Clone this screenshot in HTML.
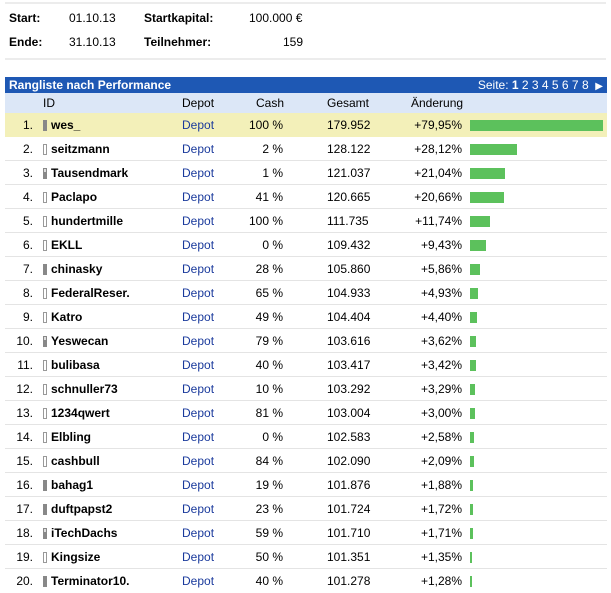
<!DOCTYPE html>
<html><head><meta charset="utf-8"><style>
*{margin:0;padding:0;box-sizing:border-box}
body{width:611px;height:593px;background:#fff;font-family:"Liberation Sans",Arial,sans-serif;font-size:12px;color:#000;position:relative;overflow:hidden}
.a{position:absolute;white-space:nowrap}
.hl{position:absolute;left:5px;width:601px;height:2px;background:#ececec}
.bar{position:absolute;left:5px;width:602px;height:16px;top:77px;background:#1e58b4;color:#fff;font-weight:bold;font-size:12px;line-height:16px;padding-left:4px}
.hdr{position:absolute;left:5px;width:602px;height:20px;top:93px;background:#dce7f7;line-height:20px}
.r{position:absolute;left:5px;width:602px;height:24px;line-height:24px;border-bottom:1px solid #e4e4e4}
.r.first{background:#f3f0b9;border-bottom:none}
.r span{position:absolute;top:0}
.n{right:574px;text-align:right}
.ic{left:38px;top:7px!important;width:4px;height:11px;border:1px solid #999}
.ic.f{background:#888;border-color:#888}
.ic.h{background:linear-gradient(#ddd 35%,#888 35%);border-color:#888}
.nm{left:46px;font-weight:bold}
.dp{left:177px;color:#1a3a9c}
.c{right:324px}
.g{left:322px}
.p{right:145px}
.b{left:465px;top:7px!important;height:11px;background:#5cc15c}
</style></head><body>
<div class="hl" style="top:2px"></div>
<div class="a" style="left:9px;top:11px;font-weight:bold">Start:</div>
<div class="a" style="left:69px;top:11px">01.10.13</div>
<div class="a" style="left:144px;top:11px;font-weight:bold">Startkapital:</div>
<div class="a" style="left:249px;top:11px">100.000 €</div>
<div class="a" style="left:9px;top:35px;font-weight:bold">Ende:</div>
<div class="a" style="left:69px;top:35px">31.10.13</div>
<div class="a" style="left:144px;top:35px;font-weight:bold">Teilnehmer:</div>
<div class="a" style="left:283px;top:35px">159</div>
<div class="hl" style="top:58px"></div>
<div class="bar">Rangliste nach Performance<span style="position:absolute;right:4px;top:0;font-weight:normal">Seite: <b>1</b> 2 3 4 5 6 7 8 &nbsp;<span style="font-size:10px">▶</span></span></div>
<div class="hdr"><span class="a" style="left:38px">ID</span><span class="a" style="left:177px">Depot</span><span class="a" style="left:251px">Cash</span><span class="a" style="left:322px">Gesamt</span><span class="a" style="left:406px">Änderung</span></div>

<div class="r first" style="top:113px"><span class="n">1.</span><span class="ic f"></span><span class="nm">wes_</span><span class="dp">Depot</span><span class="c">100 %</span><span class="g">179.952</span><span class="p">+79,95%</span><span class="b" style="width:133px"></span></div>
<div class="r" style="top:137px"><span class="n">2.</span><span class="ic"></span><span class="nm">seitzmann</span><span class="dp">Depot</span><span class="c">2 %</span><span class="g">128.122</span><span class="p">+28,12%</span><span class="b" style="width:47px"></span></div>
<div class="r" style="top:161px"><span class="n">3.</span><span class="ic h"></span><span class="nm">Tausendmark</span><span class="dp">Depot</span><span class="c">1 %</span><span class="g">121.037</span><span class="p">+21,04%</span><span class="b" style="width:35px"></span></div>
<div class="r" style="top:185px"><span class="n">4.</span><span class="ic"></span><span class="nm">Paclapo</span><span class="dp">Depot</span><span class="c">41 %</span><span class="g">120.665</span><span class="p">+20,66%</span><span class="b" style="width:34px"></span></div>
<div class="r" style="top:209px"><span class="n">5.</span><span class="ic"></span><span class="nm">hundertmille</span><span class="dp">Depot</span><span class="c">100 %</span><span class="g">111.735</span><span class="p">+11,74%</span><span class="b" style="width:20px"></span></div>
<div class="r" style="top:233px"><span class="n">6.</span><span class="ic"></span><span class="nm">EKLL</span><span class="dp">Depot</span><span class="c">0 %</span><span class="g">109.432</span><span class="p">+9,43%</span><span class="b" style="width:16px"></span></div>
<div class="r" style="top:257px"><span class="n">7.</span><span class="ic f"></span><span class="nm">chinasky</span><span class="dp">Depot</span><span class="c">28 %</span><span class="g">105.860</span><span class="p">+5,86%</span><span class="b" style="width:10px"></span></div>
<div class="r" style="top:281px"><span class="n">8.</span><span class="ic"></span><span class="nm">FederalReser.</span><span class="dp">Depot</span><span class="c">65 %</span><span class="g">104.933</span><span class="p">+4,93%</span><span class="b" style="width:8px"></span></div>
<div class="r" style="top:305px"><span class="n">9.</span><span class="ic"></span><span class="nm">Katro</span><span class="dp">Depot</span><span class="c">49 %</span><span class="g">104.404</span><span class="p">+4,40%</span><span class="b" style="width:7px"></span></div>
<div class="r" style="top:329px"><span class="n">10.</span><span class="ic h"></span><span class="nm">Yeswecan</span><span class="dp">Depot</span><span class="c">79 %</span><span class="g">103.616</span><span class="p">+3,62%</span><span class="b" style="width:6px"></span></div>
<div class="r" style="top:353px"><span class="n">11.</span><span class="ic"></span><span class="nm">bulibasa</span><span class="dp">Depot</span><span class="c">40 %</span><span class="g">103.417</span><span class="p">+3,42%</span><span class="b" style="width:6px"></span></div>
<div class="r" style="top:377px"><span class="n">12.</span><span class="ic"></span><span class="nm">schnuller73</span><span class="dp">Depot</span><span class="c">10 %</span><span class="g">103.292</span><span class="p">+3,29%</span><span class="b" style="width:5px"></span></div>
<div class="r" style="top:401px"><span class="n">13.</span><span class="ic"></span><span class="nm">1234qwert</span><span class="dp">Depot</span><span class="c">81 %</span><span class="g">103.004</span><span class="p">+3,00%</span><span class="b" style="width:5px"></span></div>
<div class="r" style="top:425px"><span class="n">14.</span><span class="ic"></span><span class="nm">Elbling</span><span class="dp">Depot</span><span class="c">0 %</span><span class="g">102.583</span><span class="p">+2,58%</span><span class="b" style="width:4px"></span></div>
<div class="r" style="top:449px"><span class="n">15.</span><span class="ic"></span><span class="nm">cashbull</span><span class="dp">Depot</span><span class="c">84 %</span><span class="g">102.090</span><span class="p">+2,09%</span><span class="b" style="width:4px"></span></div>
<div class="r" style="top:473px"><span class="n">16.</span><span class="ic f"></span><span class="nm">bahag1</span><span class="dp">Depot</span><span class="c">19 %</span><span class="g">101.876</span><span class="p">+1,88%</span><span class="b" style="width:3px"></span></div>
<div class="r" style="top:497px"><span class="n">17.</span><span class="ic f"></span><span class="nm">duftpapst2</span><span class="dp">Depot</span><span class="c">23 %</span><span class="g">101.724</span><span class="p">+1,72%</span><span class="b" style="width:3px"></span></div>
<div class="r" style="top:521px"><span class="n">18.</span><span class="ic h"></span><span class="nm">iTechDachs</span><span class="dp">Depot</span><span class="c">59 %</span><span class="g">101.710</span><span class="p">+1,71%</span><span class="b" style="width:3px"></span></div>
<div class="r" style="top:545px"><span class="n">19.</span><span class="ic"></span><span class="nm">Kingsize</span><span class="dp">Depot</span><span class="c">50 %</span><span class="g">101.351</span><span class="p">+1,35%</span><span class="b" style="width:2px"></span></div>
<div class="r" style="top:569px;border-bottom:none"><span class="n">20.</span><span class="ic f"></span><span class="nm">Terminator10.</span><span class="dp">Depot</span><span class="c">40 %</span><span class="g">101.278</span><span class="p">+1,28%</span><span class="b" style="width:2px"></span></div>
</body></html>
